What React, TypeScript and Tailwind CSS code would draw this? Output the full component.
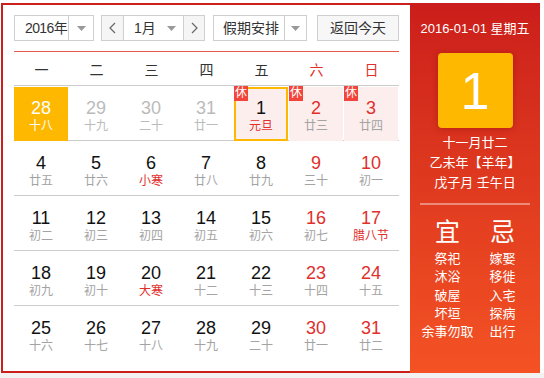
import React from "react";

type Day = {
  n: number;
  l: string;
  kind?: "prev" | "sel" | "today" | "hol";
  red?: boolean; // weekend number red
  lred?: boolean; // lunar red
  rest?: boolean;
};

const rows: Day[][] = [
  [
    { n: 28, l: "十八", kind: "sel" },
    { n: 29, l: "十九", kind: "prev" },
    { n: 30, l: "二十", kind: "prev" },
    { n: 31, l: "廿一", kind: "prev" },
    { n: 1, l: "元旦", kind: "today", lred: true, rest: true },
    { n: 2, l: "廿三", kind: "hol", red: true, rest: true },
    { n: 3, l: "廿四", kind: "hol", red: true, rest: true },
  ],
  [
    { n: 4, l: "廿五" },
    { n: 5, l: "廿六" },
    { n: 6, l: "小寒", lred: true },
    { n: 7, l: "廿八" },
    { n: 8, l: "廿九" },
    { n: 9, l: "三十", red: true },
    { n: 10, l: "初一", red: true },
  ],
  [
    { n: 11, l: "初二" },
    { n: 12, l: "初三" },
    { n: 13, l: "初四" },
    { n: 14, l: "初五" },
    { n: 15, l: "初六" },
    { n: 16, l: "初七", red: true },
    { n: 17, l: "腊八节", red: true, lred: true },
  ],
  [
    { n: 18, l: "初九" },
    { n: 19, l: "初十" },
    { n: 20, l: "大寒", lred: true },
    { n: 21, l: "十二" },
    { n: 22, l: "十三" },
    { n: 23, l: "十四", red: true },
    { n: 24, l: "十五", red: true },
  ],
  [
    { n: 25, l: "十六" },
    { n: 26, l: "十七" },
    { n: 27, l: "十八" },
    { n: 28, l: "十九" },
    { n: 29, l: "二十" },
    { n: 30, l: "廿一", red: true },
    { n: 31, l: "廿二", red: true },
  ],
];

const Caret = () => (
  <svg width="9" height="5" viewBox="0 0 9 5">
    <polygon points="0,0 9,0 4.5,5" fill="#999" />
  </svg>
);

const Chevron = ({ dir }: { dir: "l" | "r" }) => (
  <svg width="7" height="12" viewBox="0 0 7 12">
    <polyline
      points={dir === "l" ? "6,1 1,6 6,11" : "1,1 6,6 1,11"}
      fill="none"
      stroke="#666"
      strokeWidth="1.2"
    />
  </svg>
);

function Cell({ d }: { d: Day }) {
  let bg = "";
  if (d.kind === "sel") bg = "bg-[#ffb800]";
  else if (d.kind === "hol" || d.kind === "today") bg = "bg-[#fdeeee]";
  const border = d.kind === "today" ? "border-2 border-[#ffb800] pt-[9px]" : "pt-[11px]";
  let numColor = "text-[#111]";
  let lunColor = "text-[#a3a3a3]";
  if (d.kind === "prev") {
    numColor = "text-[#bbbbbb]";
    lunColor = "text-[#bbbbbb]";
  } else if (d.kind === "sel") {
    numColor = "text-white";
    lunColor = "text-white";
  } else if (d.red) numColor = "text-[#e12f2c]";
  if (d.lred) lunColor = "text-[#e12f2c]";
  return (
    <div className="relative h-[54px] mt-[1px] mr-[1px]">
      <div className={`h-full flex flex-col items-center ${bg} ${border}`}>
        <div className={`text-[18px] leading-[20px] ${numColor}`}>{d.n}</div>
        <div className={`text-[12px] leading-[16px] ${lunColor}`}>{d.l}</div>
      </div>
      {d.rest && (
        <div className="absolute left-0 top-[-1px] w-[14px] h-[15px] bg-[#f2443a] text-white text-[12px] leading-[15px] text-center">
          休
        </div>
      )}
    </div>
  );
}

export default function App() {
  const week = ["一", "二", "三", "四", "五", "六", "日"];
  return (
    <div
      className="w-[544px] h-[378px] bg-white overflow-hidden"
      style={{ fontFamily: '"Liberation Sans", "Noto Sans CJK SC", sans-serif' }}
    >
      <div className="ml-[1px] mt-[3px] flex h-[370px] w-[539px]">
        <div className="w-[409px] border-2 border-r-0 border-[#cc1f1b] px-[11px] pt-[10px]">
          {/* controls */}
          <div className="flex h-[26px] text-[14px] text-[#333]">
            <div className="flex w-[80px] border border-[#cfcfcf]">
              <div className="flex-1 pl-[10px] leading-[24px] whitespace-nowrap tracking-[-0.6px]">2016年</div>
              <div className="w-[25px] border-l border-[#cfcfcf] flex items-center justify-center">
                <Caret />
              </div>
            </div>
            <div className="ml-[7px] flex w-[104px] border border-[#cfcfcf]">
              <div className="w-[22px] bg-[#f5f5f5] border-r border-[#cfcfcf] flex items-center justify-center">
                <Chevron dir="l" />
              </div>
              <div className="flex-1 flex items-center pl-[10px] pr-[7px] justify-between">
                <span className="leading-[24px]">1月</span>
                <Caret />
              </div>
              <div className="w-[21px] bg-[#f5f5f5] border-l border-[#cfcfcf] flex items-center justify-center">
                <Chevron dir="r" />
              </div>
            </div>
            <div className="ml-[8px] flex w-[94px] border border-[#cfcfcf]">
              <div className="flex-1 pl-[9px] leading-[24px] whitespace-nowrap">假期安排</div>
              <div className="w-[22px] border-l border-[#cfcfcf] flex items-center justify-center">
                <Caret />
              </div>
            </div>
            <div className="ml-[10px] w-[82px] border border-[#cfcfcf] bg-[#f7f7f7] text-center leading-[24px]">
              返回今天
            </div>
          </div>
          <div className="mt-[10px] h-[1px] bg-[#e8594a]" />
          {/* weekday header */}
          <div className="grid grid-cols-7 h-[33px] pt-[3px] text-[14px]">
            {week.map((w, i) => (
              <div
                key={w}
                className={`flex items-center justify-center ${i >= 5 ? "text-[#e12f2c]" : "text-[#333]"}`}
              >
                {w}
              </div>
            ))}
          </div>
          {rows.map((r, ri) => (
            <div key={ri} className="grid grid-cols-7 h-[55px] border-t border-[#cccccc]">
              {r.map((d, di) => (
                <Cell key={di} d={d} />
              ))}
            </div>
          ))}
        </div>
        {/* right panel */}
        <div className="w-[130px] h-full bg-linear-to-b from-[#cb1d1b] to-[#f45224] flex flex-col items-center text-white">
          <div className="mt-[18px] text-[13px] leading-[16px]">2016-01-01 星期五</div>
          <div className="mt-[16px] w-[75px] h-[75px] rounded-[4px] bg-[#ffb800] shadow-[0_1px_6px_rgba(120,0,0,0.35)] flex items-center justify-center text-[52px] leading-none">
            1
          </div>
          <div className="mt-[5px] text-[13px] leading-[20px] text-center">
            <div>十一月廿二</div>
            <div>乙未年【羊年】</div>
            <div>戊子月 壬午日</div>
          </div>
          <div className="mt-[10px] w-[110px] h-[2px] bg-[#ffffff]/40" />
          <div className="mt-[12px] flex w-[110px]">
            <div className="w-[55px] flex flex-col items-center">
              <div className="text-[25px] leading-[30px]">宜</div>
              <div className="mt-[3px] text-[13px] leading-[18.3px] text-center whitespace-nowrap">
                <div>祭祀</div>
                <div>沐浴</div>
                <div>破屋</div>
                <div>坏垣</div>
                <div>余事勿取</div>
              </div>
            </div>
            <div className="w-[55px] flex flex-col items-center">
              <div className="text-[25px] leading-[30px]">忌</div>
              <div className="mt-[3px] text-[13px] leading-[18.3px] text-center">
                <div>嫁娶</div>
                <div>移徙</div>
                <div>入宅</div>
                <div>探病</div>
                <div>出行</div>
              </div>
            </div>
          </div>
        </div>
      </div>
      <div className="h-[5px] bg-[#f2f2f2]" />
    </div>
  );
}
